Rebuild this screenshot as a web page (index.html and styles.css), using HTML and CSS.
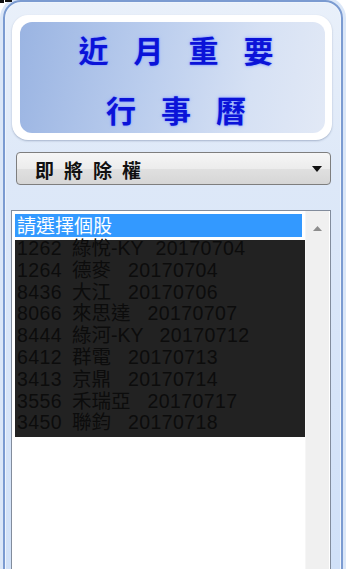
FILE: index.html
```html
<!DOCTYPE html>
<html lang="zh-Hant">
<head>
<meta charset="utf-8">
<title>近月重要行事曆</title>
<link rel="stylesheet" href="styles.css">
</head>
<body>
<div class="mark"><span class="m1"></span><span class="m2"></span></div>
<div class="panel">
  <div class="card">
    <div class="banner">
      <div class="title">
        <div class="t-line">近月重要</div>
        <div class="t-line">行事曆</div>
      </div>
    </div>
  </div>
  <div class="select">
    <span class="select-text">即將除權</span>
    <svg class="caret" width="10" height="6" viewBox="0 0 10 6"><polygon points="0,0 10,0 5,6" fill="#111"/></svg>
  </div>
  <div class="listbox">
    <div class="list">
      <div class="item selected">請選擇個股</div>
      <div class="dark">
        <div class="rows">
          <div class="row"><span class="code">1262</span><span class="name">綠悅-KY</span><span class="date d-ky1">20170704</span></div>
          <div class="row"><span class="code">1264</span><span class="name">德麥</span><span class="date">20170704</span></div>
          <div class="row"><span class="code">8436</span><span class="name">大江</span><span class="date">20170706</span></div>
          <div class="row"><span class="code">8066</span><span class="name">來思達</span><span class="date">20170707</span></div>
          <div class="row"><span class="code">8444</span><span class="name">綠河-KY</span><span class="date d-ky2">20170712</span></div>
          <div class="row"><span class="code">6412</span><span class="name">群電</span><span class="date">20170713</span></div>
          <div class="row"><span class="code">3413</span><span class="name">京鼎</span><span class="date">20170714</span></div>
          <div class="row"><span class="code">3556</span><span class="name">禾瑞亞</span><span class="date">20170717</span></div>
          <div class="row"><span class="code">3450</span><span class="name">聯鈞</span><span class="date">20170718</span></div>
        </div>
      </div>
    </div>
    <div class="scroll">
      <svg class="up" width="9" height="5" viewBox="0 0 9 5"><polygon points="0,5 9,5 4.5,0" fill="#8d8d8d"/></svg>
    </div>
  </div>
</div>
</body>
</html>
```
FILE: styles.css
```css
html, body {
  margin: 0;
  padding: 0;
  height: 100%;
  overflow: hidden;
  background: #ffffff;
}

body {
  font-family: "Noto Sans CJK TC", "Noto Sans", sans-serif;
  position: relative;
}

.mark {
  position: absolute;
  left: 0;
  top: 0;
  z-index: 3;
}
.mark .m1 {
  position: absolute;
  left: 0;
  top: 0;
  width: 4px;
  height: 3px;
  background: #111;
}
.mark .m2 {
  position: absolute;
  left: 5px;
  top: 0;
  width: 7px;
  height: 2px;
  background: #111;
}

.panel {
  box-sizing: border-box;
  margin-left: 3px;
  width: 340px;
  height: 620px;
  border: 2px solid #7b9bd1;
  border-radius: 18px 18px 0 0;
  box-shadow: 0 0 0 3px #dbe7f8, inset 0 0 0 1px #eef4fc;
  background: linear-gradient(to bottom, #e9f0fa 0, #dde8f8 180px, #cfe0f8 100%);
  padding: 13px 10px 0 6px;
}

.card {
  margin: 0 -1px 0 1px;
  background: #ffffff;
  border-radius: 16px;
  padding: 7px 7px 7px 8px;
  box-shadow: 0 1px 2px rgba(60, 80, 120, 0.35);
}

.banner {
  display: flow-root;
  height: 111px;
  border-radius: 12px;
  background: linear-gradient(100deg, #9ab4e2 0%, #b9cced 40%, #d6e1f4 75%, #e2e9f6 100%);
}

.title {
  margin-top: -3px;
  padding-left: 32px;
  text-align: center;
  font-size: 30px;
  font-weight: 700;
  line-height: 60px;
  letter-spacing: 25px;
  color: #0b13d8;
  text-shadow: 0 0 2px #6f8cff, 0 0 4px #a8bcff;
}

.select {
  box-sizing: border-box;
  margin: 12px 0 0 5px;
  height: 33px;
  border: 1px solid #7e7e7e;
  border-radius: 4px;
  background: linear-gradient(to bottom, #f6f6f6 0%, #ececec 50%, #e0e0e0 51%, #d6d6d6 100%);
  display: flex;
  align-items: center;
  justify-content: space-between;
  padding: 2px 8px 0 18px;
}

.select-text {
  font-size: 19px;
  font-weight: 700;
  letter-spacing: 10px;
  color: #111;
}

.caret {
  display: block;
  margin-top: -1px;
}

.listbox {
  box-sizing: border-box;
  margin-top: 25px;
  height: 420px;
  border: 1px solid #828c9c;
  background: #ffffff;
  display: flex;
  padding: 0 1px 0 3px;
}

.list {
  width: 290px;
  padding-top: 3px;
  font-family: "Liberation Sans", "Noto Sans CJK TC", sans-serif;
}

.item {
  box-sizing: border-box;
  margin-right: 3px;
  height: 23px;
  line-height: 23px;
  padding: 1px 0 0 2px;
  font-size: 19px;
}

.selected {
  background: #3399ff;
  color: #ffffff;
}

.dark {
  display: flow-root;
  margin-top: 3px;
  background: #222222;
  padding-bottom: 3px;
}

.rows {
  margin-top: -2px;
}

.row {
  height: 21.8px;
  line-height: 21.8px;
  padding-left: 2px;
  font-size: 19.5px;
  color: #0c0c0c;
  white-space: nowrap;
}

.code,
.date {
  letter-spacing: 0.4px;
}

.name {
  margin-left: 10px;
}

.date {
  margin-left: 17px;
}

.d-ky1 {
  margin-left: 12px;
}

.d-ky2 {
  margin-left: 16px;
}

.scroll {
  width: 24px;
  background: #f0f0f0;
  border-left: 1px solid #f6f6f6;
  box-sizing: border-box;
  padding: 15px 0 0 7px;
}

.up {
  display: block;
}
```
